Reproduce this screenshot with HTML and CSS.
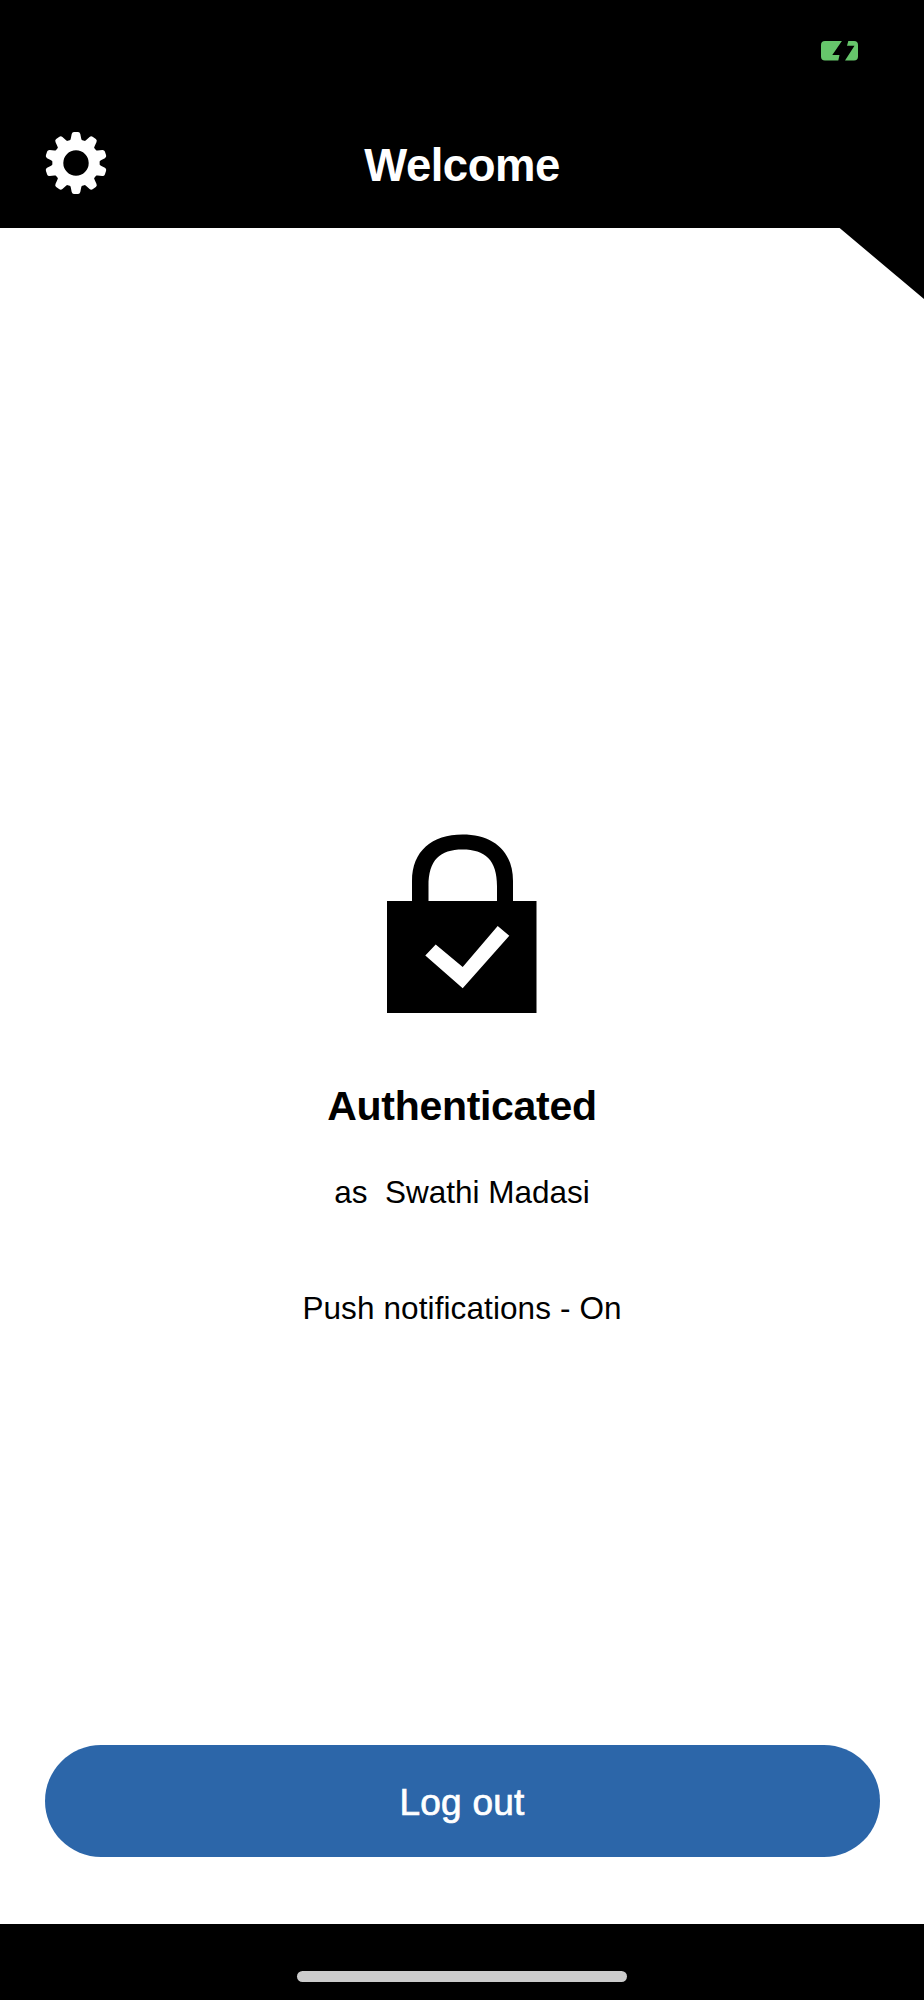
FILE: index.html
```html
<!DOCTYPE html>
<html lang="en">
<head>
    <meta charset="UTF-8">
    <meta name="viewport" content="width=device-width, initial-scale=1.0">
    <title>Welcome</title>
    <link rel="stylesheet" href="styles.css">
</head>
<body>
    <header>
        <div class="status-bar">
            <svg class="battery" viewBox="0 0 37 20" aria-label="Battery charging">
                <path d="M4 0H20.9L11.3 14H18.5L17.3 19.5H4Q0 19.5 0 15.5V4Q0 0 4 0Z"/>
                <path d="M27.3 0H33Q37 0 37 4V15.5Q37 19.5 33 19.5H24L33.5 4.8H26Z"/>
            </svg>
        </div>
        <nav>
            <a class="settings" href="#" aria-label="Settings">
                <svg id="gear" viewBox="-31 -31 62 62">
                    <defs>
                        <path id="tooth" d="M-6 -22L-5.2 -24.5L-4.3 -29Q-3.8 -31 -2 -31H2Q3.8 -31 4.3 -29L5.2 -24.5L6 -22Z"/>
                    </defs>
                    <circle r="18.2" fill="none" stroke="#fff" stroke-width="11"/>
                    <use href="#tooth"/>
                    <use href="#tooth" transform="rotate(36)"/>
                    <use href="#tooth" transform="rotate(72)"/>
                    <use href="#tooth" transform="rotate(108)"/>
                    <use href="#tooth" transform="rotate(144)"/>
                    <use href="#tooth" transform="rotate(180)"/>
                    <use href="#tooth" transform="rotate(216)"/>
                    <use href="#tooth" transform="rotate(252)"/>
                    <use href="#tooth" transform="rotate(288)"/>
                    <use href="#tooth" transform="rotate(324)"/>
                </svg>
            </a>
            <h1>Welcome</h1>
        </nav>
    </header>

    <main>
        <svg class="lock" viewBox="0 0 150 179">
            <path d="M25 68V47C25 17 45 0.5 75.5 0.5S126 17 126 47V68H110V52C110 26 98 15.5 75.5 15.5S41.5 26 41.5 52V68Z"/>
            <path d="M0 67H149.5V179H0Z"/>
            <path fill="#fff" d="M38.3 121.5L48.7 110.5L75.7 133L110.7 92L122.3 101.7L75.7 154.3Z"/>
        </svg>
        <h2>Authenticated</h2>
        <p class="user">as&nbsp; Swathi Madasi</p>
        <p class="push">Push notifications - On</p>
        <button type="button">Log out</button>
    </main>

    <!-- Home indicator -->
    <footer>
        <div class="home-bar"></div>
    </footer>
</body>
</html>
```

FILE: styles.css
```css
* {
    box-sizing: border-box;
}

body {
    margin: 0;
    height: 2000px;
    display: flex;
    flex-direction: column;
    background: #000;
    color: #000;
    font-family: "Liberation Sans", Arial, sans-serif;
}

header {
    height: 227.5px;
    color: #fff;
}

.status-bar {
    height: 98px;
    padding: 41px 66px 0 0;
    display: flex;
    justify-content: flex-end;
}

.battery {
    width: 37px;
    height: 20px;
    fill: #66c66b;
}

nav {
    height: 129px;
    padding: 0 45px;
    display: grid;
    grid-template-columns: 62px 1fr 62px;
    align-items: center;
}

.settings svg {
    display: block;
    width: 62px;
    height: 62px;
    fill: #fff;
}

h1 {
    margin: 0;
    padding-top: 6px;
    text-align: center;
    font-size: 45.5px;
    line-height: 52px;
    letter-spacing: -0.5px;
}

/* White panel with the top right corner cut off */
main {
    height: 1696.5px;
    padding: 606.5px 44.5px 67px;
    display: flex;
    flex-direction: column;
    align-items: center;
    background: #fff;
    clip-path: polygon(0 0, 839px 0, 100% 71.5px, 100% 100%, 0 100%);
}

.lock {
    flex: none;
    width: 150px;
    height: 179px;
}

h2 {
    margin: 68px 0 0;
    font-size: 41px;
    line-height: 50px;
    letter-spacing: -0.3px;
}

p {
    margin: 0;
    font-size: 31.5px;
    line-height: 40px;
}

.user {
    margin-top: 41px;
}

.push {
    margin-top: 76px;
    letter-spacing: 0.1px;
}

button {
    width: 100%;
    height: 112px;
    margin-top: auto;
    padding: 3px 0 0;
    border: none;
    border-radius: 56px;
    background: #2c66a9;
    color: #fff;
    font-family: inherit;
    font-size: 37px;
    letter-spacing: 0.2px;
    -webkit-text-stroke: 0.7px #fff;
}

footer {
    height: 76px;
    padding-top: 46.5px;
}

.home-bar {
    width: 330px;
    height: 11.5px;
    margin: 0 auto;
    border-radius: 6px;
    background: #cbcbcb;
}
```
